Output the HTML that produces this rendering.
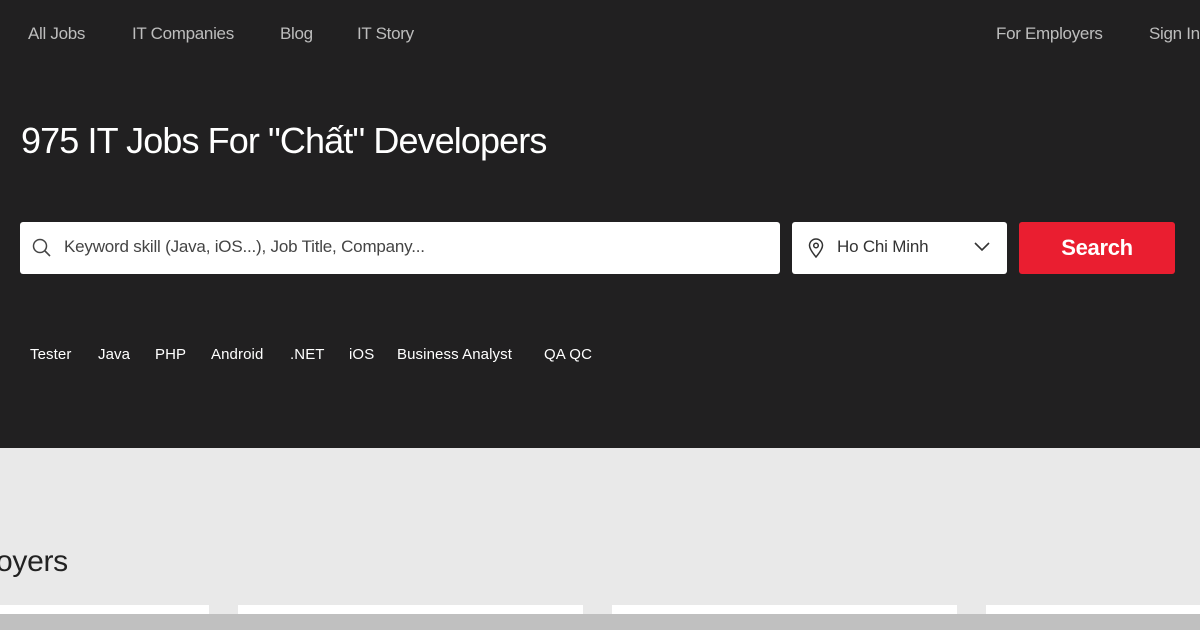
<!DOCTYPE html>
<html><head><meta charset="utf-8"><style>
*{margin:0;padding:0;box-sizing:border-box}
body{width:1200px;height:630px;overflow:hidden;background:#e9e9e9;font-family:"Liberation Sans",sans-serif;position:relative}
.top{position:absolute;left:0;top:0;width:1200px;height:448px;background:#212021}
.a{position:absolute;color:#bdbdbd;font-size:17px;top:24px;letter-spacing:-0.3px}
h1{position:absolute;left:21px;top:120px;color:#fff;font-size:36px;font-weight:400;letter-spacing:-0.9px}
.box{position:absolute;background:#fff;border-radius:3px}
.ph{position:absolute;color:#444;font-size:17px;top:15px;letter-spacing:-0.2px}
.tag{position:absolute;top:346px;color:#fff;font-size:15px;letter-spacing:0.1px}
.btn{position:absolute;left:1019px;top:222px;width:156px;height:52px;background:#ea1e30;border-radius:3px;color:#fff;font-size:22px;font-weight:bold;text-align:center;line-height:52px;letter-spacing:-0.3px}
.card{position:absolute;top:605px;height:12px;background:#fff}
</style></head><body>
<div class="top"></div>
<div class="a" style="left:28px">All Jobs</div>
<div class="a" style="left:132px">IT Companies</div>
<div class="a" style="left:280px">Blog</div>
<div class="a" style="left:357px">IT Story</div>
<div class="a" style="left:996px">For Employers</div>
<div class="a" style="left:1149px">Sign In</div>
<h1>975 IT Jobs For "Chất" Developers</h1>
<div class="box" style="left:20px;top:222px;width:760px;height:52px">
<svg style="position:absolute;left:12px;top:16px" width="20" height="20" viewBox="0 0 20 20"><circle cx="8" cy="8" r="6.5" fill="none" stroke="#444" stroke-width="1.5"/><path d="M13 13l5 5" stroke="#444" stroke-width="1.6"/></svg>
<div class="ph" style="left:44px">Keyword skill (Java, iOS...), Job Title, Company...</div></div>
<div class="box" style="left:792px;top:222px;width:215px;height:52px">
<svg style="position:absolute;left:16px;top:16px" width="16" height="20" viewBox="0 0 16 20"><path d="M8 19C3 13 1.5 10 1.5 7.5a6.5 6.5 0 0113 0C14.5 10 13 13 8 19z" fill="none" stroke="#333" stroke-width="1.5"/><circle cx="8" cy="7.5" r="2.3" fill="none" stroke="#333" stroke-width="1.5"/></svg>
<div class="ph" style="left:45px;color:#333">Ho Chi Minh</div>
<svg style="position:absolute;left:182px;top:20px" width="16" height="10" viewBox="0 0 16 10"><path d="M1 1l7 7 7-7" fill="none" stroke="#333" stroke-width="1.6"/></svg></div>
<div class="btn">Search</div>
<div class="tag" style="left:30px">Tester</div>
<div class="tag" style="left:98px">Java</div>
<div class="tag" style="left:155px">PHP</div>
<div class="tag" style="left:211px">Android</div>
<div class="tag" style="left:290px">.NET</div>
<div class="tag" style="left:349px">iOS</div>
<div class="tag" style="left:397px">Business Analyst</div>
<div class="tag" style="left:544px">QA QC</div>
<div style="position:absolute;left:-4px;top:545px;font-size:30px;color:#222;letter-spacing:-0.3px">oyers</div>
<div class="card" style="left:0;width:209px"></div>
<div class="card" style="left:238px;width:345px"></div>
<div class="card" style="left:612px;width:345px"></div>
<div class="card" style="left:986px;width:214px"></div>
<div style="position:absolute;left:0;top:614px;width:1200px;height:16px;background:#c0c0c0"></div>
</body></html>
